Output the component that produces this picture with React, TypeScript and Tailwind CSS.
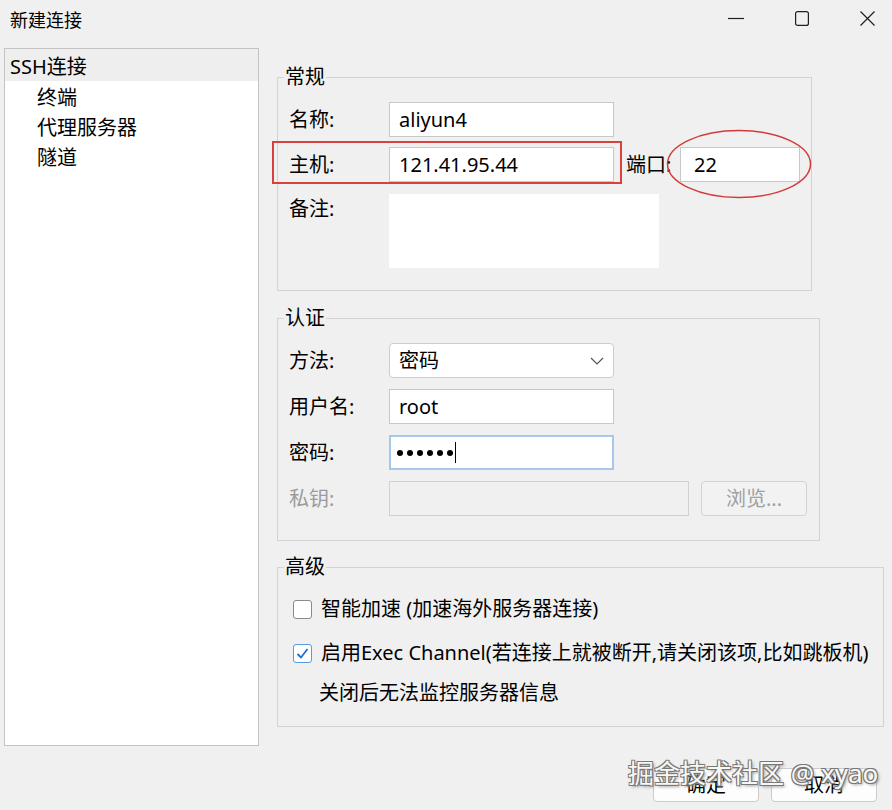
import React from "react";

const FONT = "font-['Noto_Sans','Noto_Sans_CJK_SC',sans-serif]";

function Group({
  title,
  className,
  children,
}: {
  title: string;
  className: string;
  children: React.ReactNode;
}) {
  return (
    <section className={`border border-[#d3d3d3] ${className}`}>
      <div className="-mt-[14px] ml-[6px] w-fit bg-[#f0f0f0] px-[1px] text-[20px] leading-[26px]">
        {title}
      </div>
      {children}
    </section>
  );
}

function TextBox({ value, className }: { value: string; className: string }) {
  return (
    <div
      className={`h-[35px] border border-[#c8c8c8] bg-white pl-[9px] text-[20px] leading-[33px] ${className}`}
    >
      {value}
    </div>
  );
}

function Label({ text, className = "" }: { text: string; className?: string }) {
  return <span className={`w-[100px] shrink-0 text-[20px] leading-[30px] ${className}`}>{text}</span>;
}

export default function App() {
  return (
    <div className={`relative h-[810px] w-[892px] overflow-hidden bg-[#f0f0f0] text-black ${FONT}`}>
      {/* title bar */}
      <div className="flex h-[40px] items-center">
        <span className="pl-[10px] text-[18px] leading-[24px]">新建连接</span>
        <div className="ml-auto flex items-center gap-[51px] pb-[4px] pr-[17px]">
          <svg width="16" height="16" viewBox="0 0 16 16">
            <line x1="0" y1="8.5" x2="16" y2="8.5" stroke="#1f1f1f" strokeWidth="1.2" />
          </svg>
          <svg width="14" height="15" viewBox="0 0 14 15">
            <rect x="0.6" y="0.6" width="12.8" height="13.8" rx="2" fill="none" stroke="#1f1f1f" strokeWidth="1.2" />
          </svg>
          <svg width="15" height="15" viewBox="0 0 15 15">
            <path d="M0.5 0.5 L14.5 14.5 M14.5 0.5 L0.5 14.5" stroke="#1f1f1f" strokeWidth="1.2" fill="none" />
          </svg>
        </div>
      </div>

      <div className="flex pl-[4px] pt-[8px]">
        {/* navigation tree */}
        <aside className="h-[698px] w-[255px] shrink-0 border border-[#c4c4c4] bg-white text-[20px]">
          <div className="h-[32px] bg-[#eeeeee] pl-[5px] leading-[36px]">SSH连接</div>
          <div className="pt-[2px]">
            <div className="h-[30px] pl-[32px] leading-[30px]">终端</div>
            <div className="h-[30px] pl-[32px] leading-[30px]">代理服务器</div>
            <div className="h-[30px] pl-[32px] leading-[30px]">隧道</div>
          </div>
        </aside>

        <main className="ml-[18px] flex flex-1 flex-col">
          {/* general */}
          <Group title="常规" className="mt-[29px] h-[214px] w-[535px]">
            <div className="mt-[12px] flex items-center pl-[11px]">
              <Label text="名称:" />
              <TextBox value="aliyun4" className="w-[225px]" />
            </div>
            <div className="mt-[10px] flex items-center pl-[11px]">
              <Label text="主机:" />
              <TextBox value="121.41.95.44" className="w-[225px]" />
              <span className="ml-[12px] w-[54px] text-[20px] leading-[30px]">端口:</span>
              <TextBox value="22" className="w-[120px] pl-[13px]" />
            </div>
            <div className="mt-[12px] flex items-start pl-[11px]">
              <Label text="备注:" />
              <div className="h-[74px] w-[270px] bg-white" />
            </div>
          </Group>

          {/* authentication */}
          <Group title="认证" className="mt-[27px] h-[223px] w-[543px]">
            <div className="mt-[12px] flex items-center pl-[11px]">
              <Label text="方法:" />
              <div className="flex h-[35px] w-[225px] items-center justify-between rounded-[4px] border border-[#cdcdcd] bg-white pl-[9px] pr-[9px] text-[20px]">
                <span className="leading-[33px]">密码</span>
                <svg width="14" height="8" viewBox="0 0 14 8">
                  <path d="M1 1 L7 7 L13 1" fill="none" stroke="#555555" strokeWidth="1.2" />
                </svg>
              </div>
            </div>
            <div className="mt-[11px] flex items-center pl-[11px]">
              <Label text="用户名:" />
              <TextBox value="root" className="w-[225px]" />
            </div>
            <div className="mt-[11px] flex items-center pl-[11px]">
              <Label text="密码:" />
              <div className="flex h-[35px] w-[225px] items-center border-2 border-[#a6c6ea] bg-white pl-[6px]">
                <div className="flex items-center gap-[4px]">
                  <span className="h-[6px] w-[6px] rounded-full bg-black" />
                  <span className="h-[6px] w-[6px] rounded-full bg-black" />
                  <span className="h-[6px] w-[6px] rounded-full bg-black" />
                  <span className="h-[6px] w-[6px] rounded-full bg-black" />
                  <span className="h-[6px] w-[6px] rounded-full bg-black" />
                  <span className="h-[6px] w-[6px] rounded-full bg-black" />
                </div>
                <span className="ml-[2px] h-[21px] w-[1px] bg-black" />
              </div>
            </div>
            <div className="mt-[11px] flex items-center pl-[11px]">
              <Label text="私钥:" className="text-[#9b9b9b]" />
              <div className="h-[35px] w-[300px] border border-[#d0d0d0] bg-[#f0f0f0]" />
              <div className="ml-[12px] flex h-[35px] w-[106px] items-center justify-center rounded-[4px] border border-[#d3d3d3] bg-[#f2f2f2] text-[20px] text-[#a0a0a0]">
                浏览...
              </div>
            </div>
          </Group>

          {/* advanced */}
          <Group title="高级" className="mt-[26px] h-[160px] w-[607px]">
            <div className="mt-[14px] flex h-[30px] items-center pl-[15px]">
              <span className="h-[19px] w-[19px] rounded-[3px] border border-[#8a8a8a] bg-white" />
              <span className="ml-[9px] text-[20px] leading-[30px]">智能加速 (加速海外服务器连接)</span>
            </div>
            <div className="mt-[14px] flex h-[30px] items-center pl-[15px]">
              <span className="flex h-[19px] w-[19px] items-center justify-center rounded-[3px] border border-[#5a9ae0] bg-white">
                <svg width="15" height="15" viewBox="0 0 15 15">
                  <path d="M2.5 8 L6 11.5 L12.5 3" fill="none" stroke="#1d6fd2" strokeWidth="1.8" />
                </svg>
              </span>
              <span className="ml-[9px] text-[20px] leading-[30px]">
                启用Exec Channel(若连接上就被断开,请关闭该项,比如跳板机)
              </span>
            </div>
            <div className="mt-[10px] h-[30px] pl-[41px] text-[20px] leading-[30px]">关闭后无法监控服务器信息</div>
          </Group>

          <div className="mt-[41px] flex justify-end gap-[12px] pr-[15px]">
            <button className="h-[34px] w-[106px] rounded-[4px] border border-[#cccccc] bg-[#fdfdfd] text-[20px] leading-[32px]">
              确定
            </button>
            <button className="h-[34px] w-[106px] rounded-[4px] border border-[#cccccc] bg-[#fdfdfd] text-[20px] leading-[32px]">
              取消
            </button>
          </div>
        </main>
      </div>

      {/* annotations */}
      <div className="absolute left-[272px] top-[141px] h-[43px] w-[350px] border-2 border-[#d8413d]" />
      <svg className="absolute left-[666px] top-[129px]" width="146" height="70" viewBox="0 0 146 70">
        <ellipse cx="73" cy="35" rx="71.5" ry="33.5" fill="none" stroke="#d33b3b" strokeWidth="1.5" />
      </svg>
      <div className="absolute left-[628px] top-[755px] whitespace-nowrap text-[26px] leading-[36px] text-[#f7f7f7] [text-shadow:1px_1px_0_#777,-1px_-1px_0_#777,1px_-1px_0_#777,-1px_1px_0_#777,2px_2px_3px_#999]">
        掘金技术社区 @ xyao
      </div>
    </div>
  );
}
